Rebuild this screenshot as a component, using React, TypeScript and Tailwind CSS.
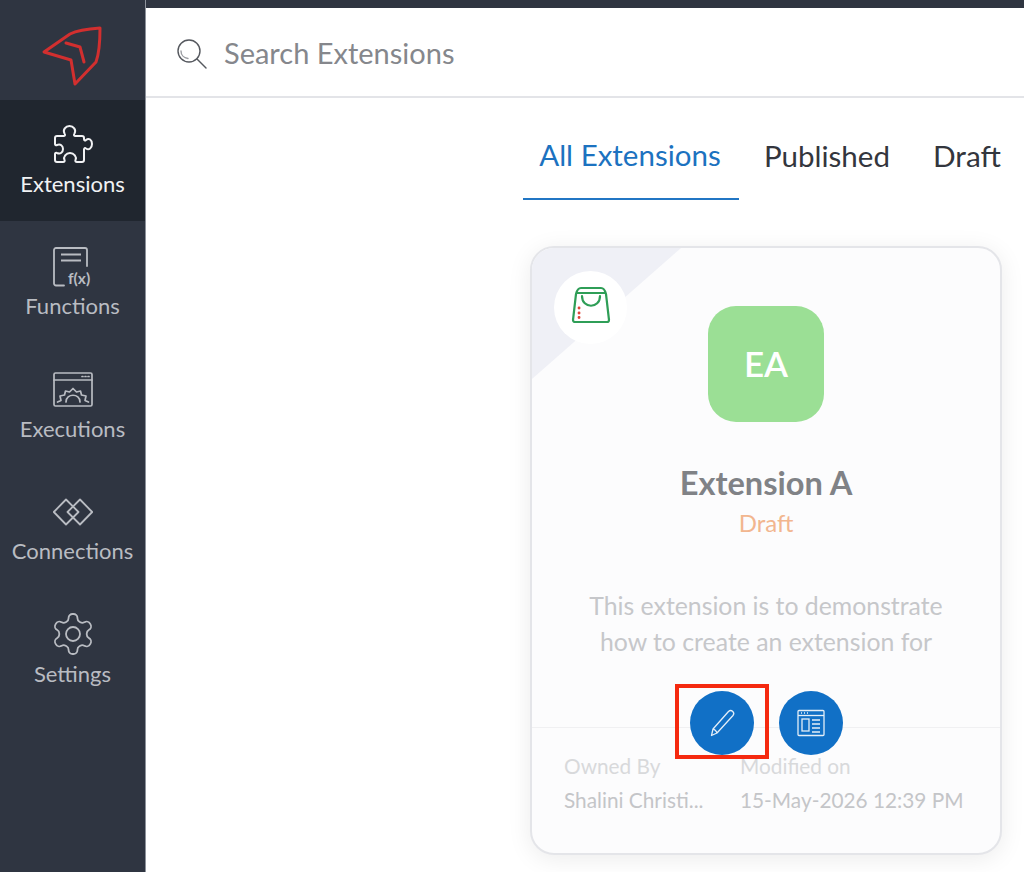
const PuzzleIcon = () => (
  <svg viewBox="0 0 40 40" className="w-10 h-10" fill="none" stroke="currentColor" strokeWidth="2" strokeLinejoin="round">
    <path d="M4 12H11C12 12 12.5 11 11.5 9.5C9.5 6 12.5 2 16.5 2C20.5 2 23.5 6 21.5 9.5C20.5 11 21 12 22 12H29a2 2 0 0 1 2 2V15C31 16.5 32 17 33 16C36 13.5 39 16 39 20C39 24 36 26.5 33 24.5C32 23.5 31 24 31 25.5V36a2 2 0 0 1-2 2H24C22.5 38 22 37 22.5 36C24 33 21 29 17 29C13 29 10 33 11.5 36C12 37 11.5 38 10 38H4a2 2 0 0 1-2-2V30C2 29 3 28.5 4 29C7.5 30.5 10 28 10 25C10 22 7.5 19.5 4 21C3 21.5 2 21 2 20V14a2 2 0 0 1 2-2Z" />
  </svg>
);

const FunctionIcon = () => (
  <svg viewBox="0 0 40 40" className="w-10 h-10" fill="none" stroke="currentColor" strokeWidth="1.800">
    <path d="M11 38.500H3a2 2 0 0 1-2-2V3a2 2 0 0 1 2-2h29a2 2 0 0 1 2 2v16" strokeLinecap="round" />
    <path d="M8 7.500h20M8 13.500h20" />
    <text x="15" y="36.500" fontSize="15.500" fontWeight="700" fill="currentColor" stroke="none" fontFamily="Lato, sans-serif">
      f(x)
    </text>
  </svg>
);

const ExecutionIcon = () => (
  <svg viewBox="0 0 40 40" className="w-10 h-10" fill="none" stroke="currentColor" strokeWidth="1.700" strokeLinecap="round" strokeLinejoin="round">
    <rect x="1" y="3" width="38" height="33" rx="1.500" />
    <path d="M1 10h38" />
    <path d="M29 6.500h1M32 6.500h1M35 6.500h1" />
    <path d="M4.500 32L8 30.500 7 26 11.500 25 12.500 21 16.500 22 20 18.500 23.500 22 27.500 21 28.500 25 33 26 32 30.500 35.500 32" />
    <path d="M13 32C13 23 27 23 27 32" />
  </svg>
);

const ConnectionIcon = () => (
  <svg viewBox="0 0 40 28" className="w-10 h-7" fill="none" stroke="currentColor" strokeWidth="1.800" strokeLinejoin="round">
    <path d="M13 1.500L25.500 14 13 26.500 .8 14Z" />
    <path d="M27 1.500L39.200 14 27 26.500 14.500 14Z" />
  </svg>
);

const GearIcon = () => (
  <svg viewBox="0 0 24 24" className="w-12 h-12 shrink-0 -mt-[1px]" fill="none" stroke="currentColor" strokeWidth="0.900" strokeLinejoin="round">
    <path d="M12.220 2h-.440a2 2 0 0 0-2 2v.180a2 2 0 0 1-1 1.730l-.430.250a2 2 0 0 1-2 0l-.150-.080a2 2 0 0 0-2.730.730l-.220.380a2 2 0 0 0 .730 2.730l.150.100a2 2 0 0 1 1 1.720v.510a2 2 0 0 1-1 1.740l-.150.090a2 2 0 0 0-.730 2.730l.220.380a2 2 0 0 0 2.730.730l.150-.080a2 2 0 0 1 2 0l.430.250a2 2 0 0 1 1 1.730V20a2 2 0 0 0 2 2h.440a2 2 0 0 0 2-2v-.180a2 2 0 0 1 1-1.730l.430-.250a2 2 0 0 1 2 0l.150.080a2 2 0 0 0 2.730-.730l.220-.390a2 2 0 0 0-.730-2.730l-.150-.080a2 2 0 0 1-1-1.740v-.500a2 2 0 0 1 1-1.740l.150-.090a2 2 0 0 0 .730-2.730l-.220-.380a2 2 0 0 0-2.730-.730l-.150.080a2 2 0 0 1-2 0l-.430-.250a2 2 0 0 1-1-1.730V4a2 2 0 0 0-2-2z" />
    <circle cx="12" cy="12" r="3.500" />
  </svg>
);

const navItems = [
  { label: "Extensions", icon: <PuzzleIcon />, active: true },
  { label: "Functions", icon: <FunctionIcon /> },
  { label: "Executions", icon: <ExecutionIcon /> },
  { label: "Connections", icon: <ConnectionIcon /> },
  { label: "Settings", icon: <GearIcon /> },
];

const Sidebar = () => {
  return (
    <aside className="w-[146px] shrink-0 h-full bg-[#2f3541] border-r border-[#8d929b] flex flex-col">
      <div className="h-[100px] flex items-center justify-center">
        <svg viewBox="0 0 70 64" className="w-[70px] h-16 mr-[3px] mt-[12px]" fill="none" stroke="#d22f2f" strokeWidth="3" strokeLinejoin="round" strokeLinecap="round">
          <path d="M64 4C50 5 42 6 34 10L8 28 35 36 39 60 60 38C63 30 64 16 64 4Z" />
          <path d="M30 19l14 4 4 15" />
        </svg>
      </div>
      {navItems.map((item) => (
        <div
          key={item.label}
          className={
            item.active
              ? "h-[121px] bg-[#20262f] text-[#f1f2f4] flex flex-col items-center justify-center gap-[6px]"
              : "h-[122.5px] pt-[3px] text-[#b9bcc2] flex flex-col items-center justify-center gap-[5px]"
          }
        >
          <div className="h-10 flex items-center justify-center">{item.icon}</div>
          <span className="text-[22px] leading-7">{item.label}</span>
        </div>
      ))}
    </aside>
  );
};

const CardFooter = () => {
  return (
    <div className="mt-[67px] border-t border-[#f0f0f2] pt-[21px] px-[32px] flex text-[20.800px] leading-[34px]">
      <div className="w-[176px]">
        <div className="text-[#d8d9db]">Owned By</div>
        <div className="text-[#c4c5c8]">Shalini Christi...</div>
      </div>
      <div>
        <div className="text-[#d8d9db]">Modified on</div>
        <div className="text-[#c4c5c8]">15-May-2026 12:39 PM</div>
      </div>
    </div>
  );
};

const Card = () => {
  return (
    <div className="relative w-[472px] h-[609px] ml-[7px] mt-[46px] rounded-[24px] border-2 border-[#e4e5e9] bg-[#fcfcfd] shadow-[0_4px_24px_rgba(0,0,0,0.08)] overflow-hidden">
      <div className="absolute left-0 top-0 w-[149px] h-[131px] bg-[#eff0f6] [clip-path:polygon(0_0,100%_0,0_100%)]" />
      <div className="absolute left-[22px] top-[23px] w-[73px] h-[73px] rounded-full bg-white flex items-center justify-center">
        <svg viewBox="0 0 40 40" className="w-10 h-10 -mt-[3px]" fill="none" stroke="#2f9e57" strokeWidth="2.200" strokeLinejoin="round" strokeLinecap="round">
          <path d="M5 8C6 4 7 2 10 2H30C33 2 34 4 35 8L38 34a2 2 0 0 1-2 2H4a2 2 0 0 1-2-2Z" />
          <path d="M6 7H34" />
          <path d="M11 10c0 13 18 13 18 0" />
          <path d="M8 22h.1M8 27h.1M8 31.500h.1" stroke="#e0453a" strokeWidth="2.800" />
        </svg>
      </div>
      <div className="relative flex flex-col items-center pt-[58px]">
        <div className="w-[116px] h-[116px] pb-[2px] rounded-[28px] bg-[#9bdf95] text-white text-[35px] font-semibold flex items-center justify-center">
          EA
        </div>
        <div className="mt-[40px] text-[32.600px] leading-[42px] font-bold text-[#808286]">Extension A</div>
        <div className="mt-[5px] text-[24px] leading-7 text-[#f2b68f]">Draft</div>
        <p className="mt-[51px] w-[420px] text-center text-[24.800px] leading-9 text-[#c6c7ca]">
          This extension is to demonstrate
          <br />
          how to create an extension for
        </p>
      </div>
      <CardFooter />
      <div className="absolute left-[158px] top-[443px] flex gap-[25px]">
        <button className="w-16 h-16 rounded-full bg-[#1170c6] flex items-center justify-center">
          <svg viewBox="0 0 32 32" className="w-8 h-8" fill="none" stroke="#e4eef8" strokeWidth="1.300" strokeLinejoin="round">
            <path d="M7 22L22.500 4.500C23.800 3.300 25.500 3.300 26.800 4.500 28 5.700 28 7.300 27 8.500L11 26 5.500 28.500Z" />
            <path d="M7 22c1 .2 3.500 2 4 4" />
          </svg>
        </button>
        <button className="w-16 h-16 rounded-full bg-[#1170c6] flex items-center justify-center">
          <svg viewBox="0 0 28 28" className="w-7 h-7" fill="none" stroke="#e4eef8" strokeWidth="1.300">
            <rect x="1" y="1.500" width="26" height="25" rx="1" />
            <path d="M1 6.500h26" />
            <path d="M4 4h1M7 4h1M10 4h1" />
            <rect x="5" y="10" width="7" height="12" />
            <path d="M15 11h8M15 15h8M15 19h8M15 23h8" strokeWidth="1.500" />
          </svg>
        </button>
      </div>
      <div className="absolute left-[143px] top-[436px] w-[94px] h-[75px] border-4 border-[#f5290f]" />
    </div>
  );
};

export default function App() {
  return (
    <div className="flex w-[1024px] h-[872px] overflow-hidden bg-white font-['Lato',sans-serif]">
      <Sidebar />
      <main className="flex-1 flex flex-col">
        <div className="h-2 bg-[#2f3541]" />
        <div className="h-[90px] shrink-0 border-b-2 border-[#e3e4e8] flex items-center pl-[30px] gap-[16px]">
          <svg viewBox="0 0 32 32" className="w-8 h-8 mt-[3px]" fill="none" stroke="#55585e" strokeWidth="1.400" strokeLinecap="round">
            <circle cx="13" cy="13" r="11" />
            <path d="M5 13c0 4 3 7 7 7.500" stroke="#9a9ca1" />
            <path d="M21 21l9 9" />
          </svg>
          <span className="text-[29px] text-[#85878c] mt-[2px]">Search Extensions</span>
        </div>
        <div className="pl-[377px]">
          <div className="flex h-[102px] items-stretch">
            <div className="w-[216px] pt-[15px] pr-[2px] flex items-center justify-center border-b-2 border-[#2176c4] text-[29.500px] text-[#1c72c0]">
              All Extensions
            </div>
            <div className="ml-[25px] pt-[15px] flex items-center text-[29.500px] text-[#33363d]">Published</div>
            <div className="ml-[43px] pt-[15px] flex items-center text-[29.800px] text-[#33363d]">Draft</div>
          </div>
          <Card />
        </div>
      </main>
    </div>
  );
}
